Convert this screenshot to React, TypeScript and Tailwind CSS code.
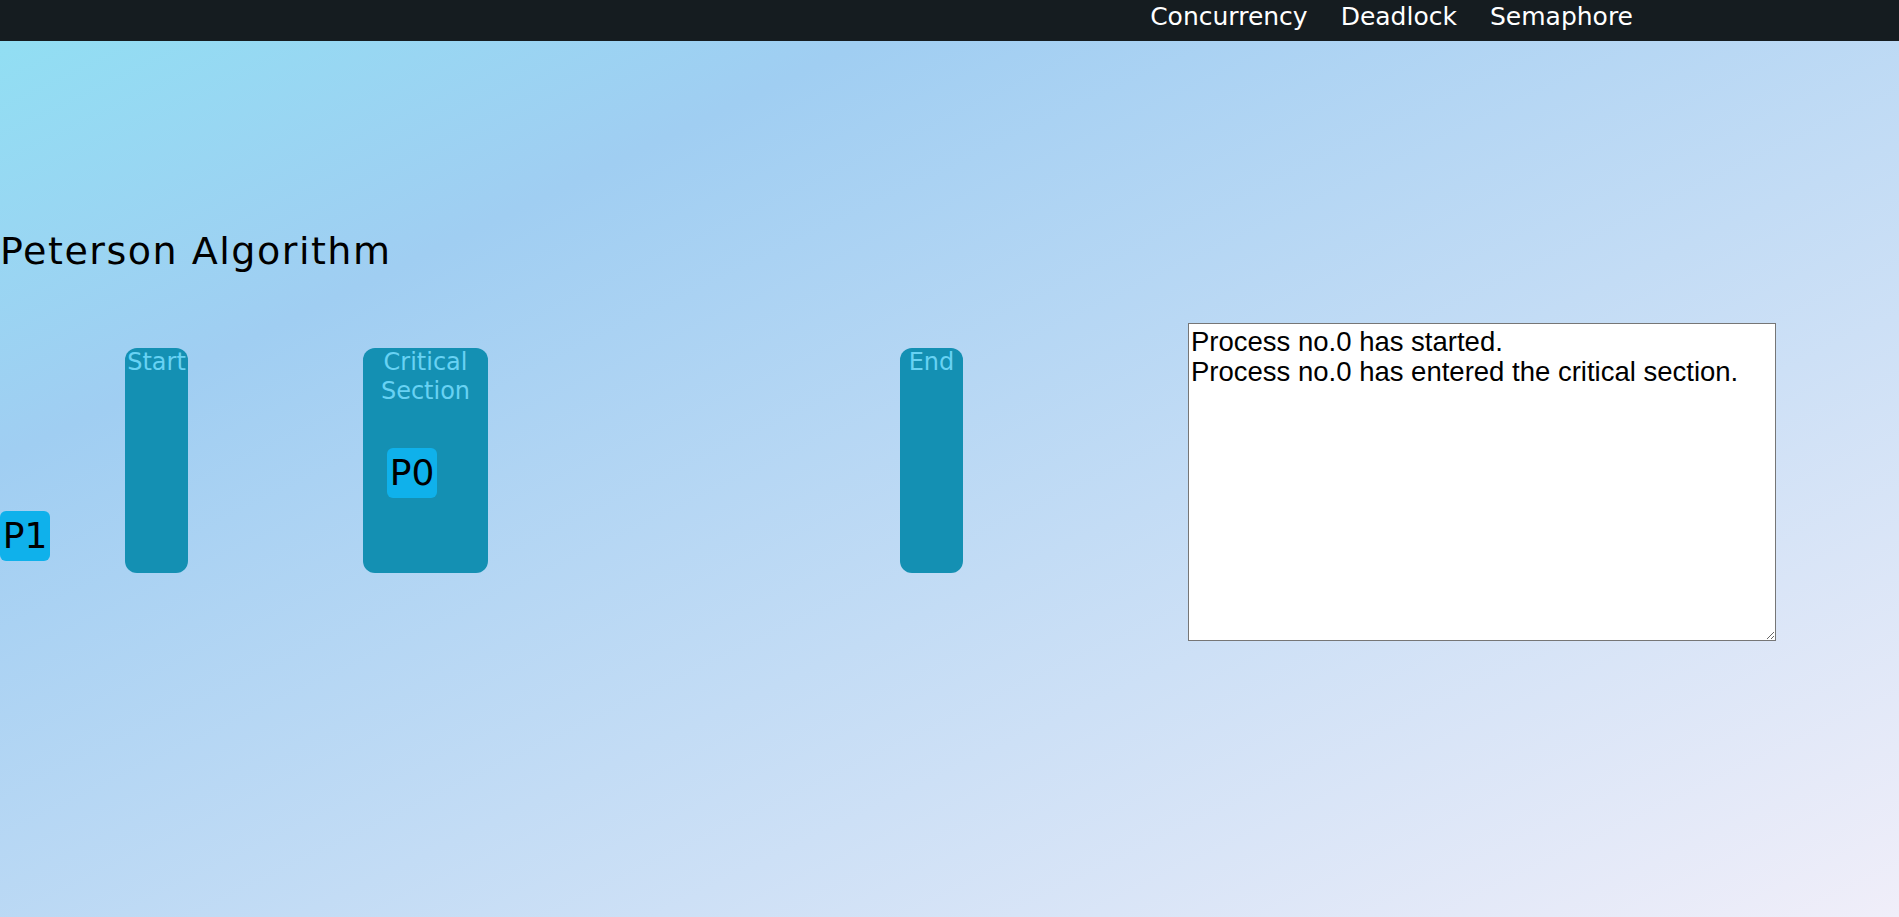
import React from "react";

const heading = { fontFamily: '"DejaVu Sans", sans-serif' } as React.CSSProperties;

function Stage({ label, width }: { label: React.ReactNode; width: string }) {
  return (
    <div
      className={`h-[225px] ${width} shrink-0 rounded-[12px] bg-[#1490b3] text-center text-[24px] leading-[29px] text-[#68d2f3]`}
      style={heading}
    >
      {label}
    </div>
  );
}

function Token({ name, className }: { name: string; className: string }) {
  return (
    <div
      className={`absolute flex h-[50px] w-[50px] items-center justify-center rounded-[6px] bg-[#0fb1eb] text-[36px] leading-[42px] text-black ${className}`}
      style={heading}
    >
      {name}
    </div>
  );
}

export default function App() {
  return (
    <div className="min-h-[917px] w-full bg-[linear-gradient(to_bottom_right,#90e0f3_0%,#a0cef2_25%,#f0eef9_100%)]">
      <nav className="flex h-[41px] items-start justify-end gap-[33px] bg-[#151c20] pr-[266px] pt-[2px]" style={heading}>
        <a className="text-[25px] leading-[29px] text-white">Concurrency</a>
        <a className="text-[25px] leading-[29px] text-white">Deadlock</a>
        <a className="text-[25px] leading-[29px] text-white">Semaphore</a>
      </nav>

      <h1
        className="mt-[188px] text-[38px] leading-[44px] tracking-[0.04em] text-black"
        style={heading}
      >
        Peterson Algorithm
      </h1>

      <div className="mt-[50px] flex items-start">
        <div className="relative h-[318px] w-[1188px] shrink-0">
          <div className="mt-[25px] flex">
            <div className="ml-[125px]">
              <Stage label="Start" width="w-[63px]" />
            </div>
            <div className="ml-[175px]">
              <Stage
                label={
                  <>
                    Critical
                    <br />
                    Section
                  </>
                }
                width="w-[125px]"
              />
            </div>
            <div className="ml-[412px]">
              <Stage label="End" width="w-[63px]" />
            </div>
          </div>
          <Token name="P0" className="left-[387px] top-[125px]" />
          <Token name="P1" className="left-0 top-[188px]" />
        </div>

        <textarea
          readOnly
          className="h-[318px] w-[588px] shrink-0 border border-[#767676] bg-white px-[2px] pt-[3px] text-[27.5px] leading-[30px] text-black outline-none"
          style={{ fontFamily: '"Liberation Sans", Arial, sans-serif' }}
          defaultValue={"Process no.0 has started.\nProcess no.0 has entered the critical section."}
        />
      </div>
    </div>
  );
}
